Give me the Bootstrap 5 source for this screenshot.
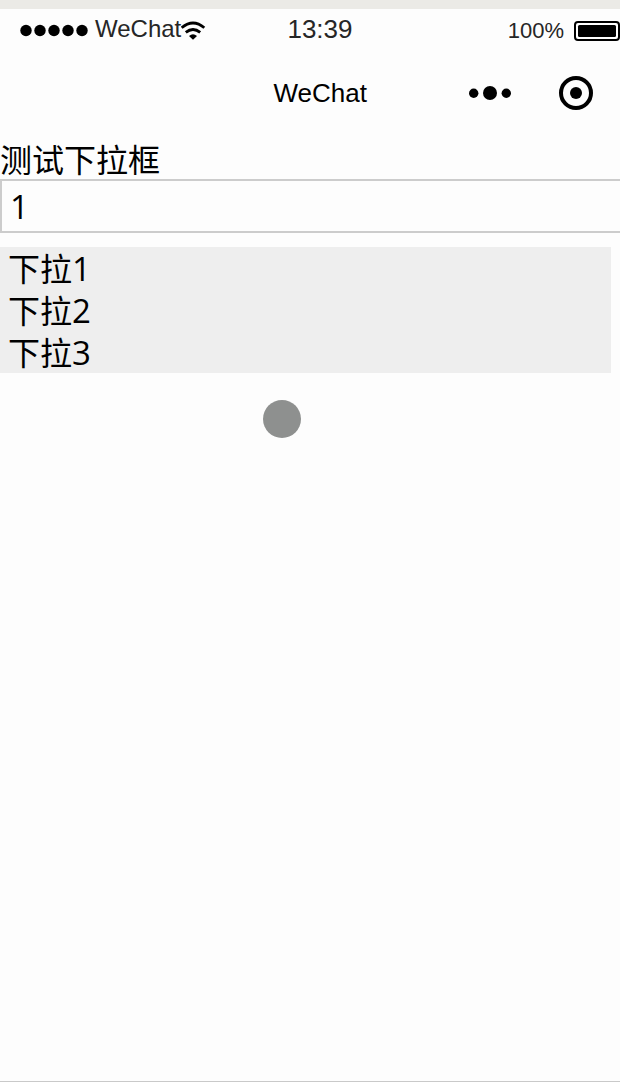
<!DOCTYPE html>
<html lang="zh-CN">
<head>
<meta charset="utf-8">
<meta name="viewport" content="width=device-width, initial-scale=1">
<title>WeChat</title>
<link href="https://cdn.jsdelivr.net/npm/bootstrap@5.3.0/dist/css/bootstrap.min.css" rel="stylesheet">
<style>
  body { height: 1082px; background: #fdfdfd; color: #000; font-family: "Liberation Sans", sans-serif; }
  .phone { border-top: 9px solid #ebeae6; border-bottom: 1px solid #c9c9c9; }
  .status-bar { height: 42px; color: #262626; }
  .status-bar > * { flex: 1 1 0; }
  .carrier { font-size: 24px; line-height: 40px; padding-left: 20px; }
  .clock { font-size: 26px; line-height: 40px; }
  .battery { font-size: 22px; line-height: 43px; }
  .title-bar { height: 86px; display: grid; grid-template-columns: 273.5px auto 1fr; padding-bottom: 2px; }
  .title-text { font-size: 26px; line-height: 84px; }
  .page-body { font-family: "Open Sans", "Noto Sans CJK SC", sans-serif; font-size: 32px; line-height: 42px; }
  .field-label { height: 42px; padding-top: 2px; }
  .field-input { height: 54px; width: 630px; padding: 0 0 0 8px; border: 2px solid #ccc; border-radius: 0; background: #fdfdfd; color: #000; font-size: 32px; line-height: 51px; }
  .options { width: 611px; margin-top: 14px; background: #eee; }
  .options li { height: 42px; padding: 1px 0 0 8px; }
  .digit { font-size: 33px; letter-spacing: -1px; }
  .pointer { left: 263px; top: 391px; width: 38px; height: 38px; background: #8e908f; }
</style>
</head>
<body>
<div class="phone h-100 d-flex flex-column overflow-hidden position-relative">
  <header>
    <div class="status-bar d-flex">
      <div class="carrier d-flex">
        <svg class="flex-shrink-0" width="75" height="42" aria-hidden="true"><circle cx="6" cy="21.5" r="5.7"/><circle cx="20" cy="21.5" r="5.7"/><circle cx="34" cy="21.5" r="5.7"/><circle cx="48" cy="21.5" r="5.7"/><circle cx="62" cy="21.5" r="5.7"/></svg>
        <span>WeChat</span>
        <svg class="flex-shrink-0" width="25" height="42" fill="none" stroke="#000" stroke-width="2.8" aria-hidden="true"><path d="M.7 18.8Q12 9.2 23.3 18.8M4.8 23.4Q12 17.6 19.2 23.4"/><path d="M8 27Q12 23.7 16 27L12 30.8Z" fill="#000" stroke="none"/></svg>
      </div>
      <div class="clock text-center">13:39</div>
      <div class="battery d-flex justify-content-end">
        <span>100%</span>
        <svg class="flex-shrink-0" width="56" height="42" aria-hidden="true"><rect x="11" y="13" width="44" height="18" rx="3" fill="#fff" stroke="#000" stroke-width="2"/><rect x="14" y="16" width="38" height="12" rx="1.5"/></svg>
      </div>
    </div>
    <div class="title-bar">
      <span></span>
      <div class="title-text">WeChat</div>
      <div class="d-flex justify-content-end">
        <svg width="155" height="84" aria-hidden="true"><circle cx="8.7" cy="42.3" r="4.7"/><circle cx="25" cy="42" r="7"/><circle cx="41.3" cy="42.3" r="4.7"/><circle cx="111" cy="42" r="15" fill="none" stroke="#000" stroke-width="4"/><circle cx="111" cy="42" r="6"/></svg>
      </div>
    </div>
  </header>
  <main class="page-body">
    <div class="field-label">测试下拉框</div>
    <div class="field-input form-control"><span class="digit">1</span></div>
    <ul class="options list-unstyled mb-0">
      <li>下拉<span class="digit">1</span></li>
      <li>下拉<span class="digit">2</span></li>
      <li>下拉<span class="digit">3</span></li>
    </ul>
  </main>
  <span class="pointer position-absolute rounded-circle"></span>
</div>
<script src="https://cdn.jsdelivr.net/npm/bootstrap@5.3.0/dist/js/bootstrap.bundle.min.js"></script>
</body>
</html>
